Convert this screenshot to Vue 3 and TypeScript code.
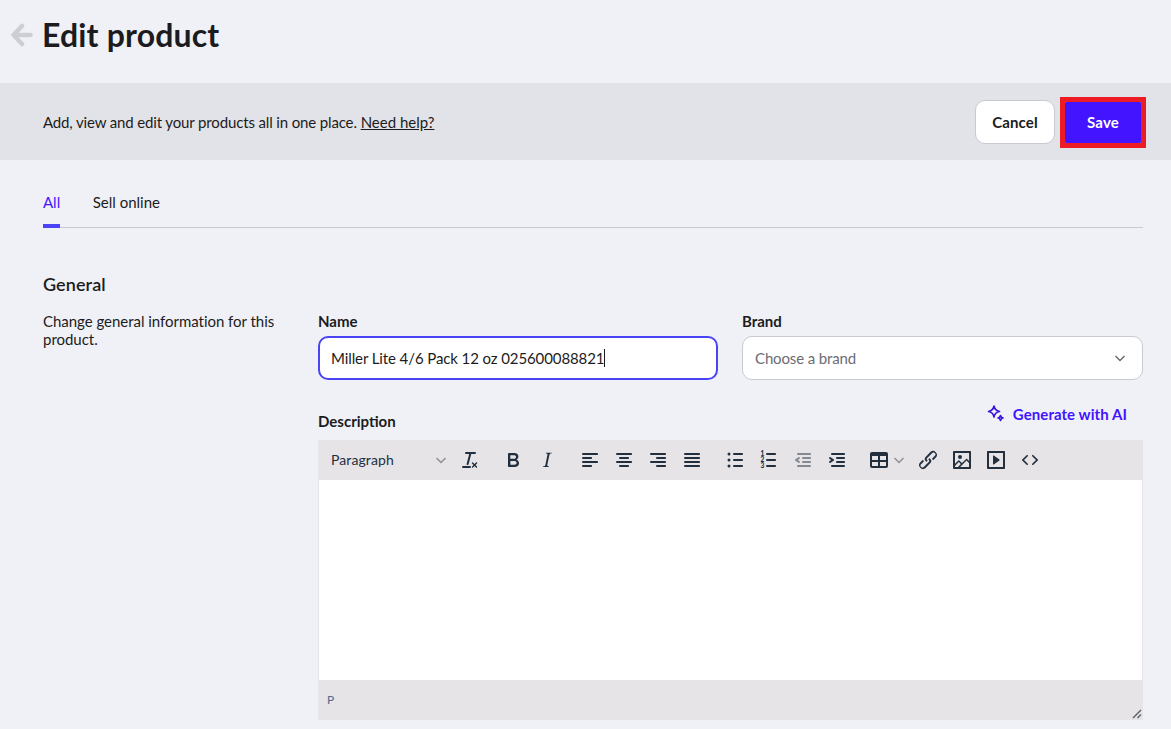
<script setup lang="ts">
const icons = {
  removeFormat: 'M13.2 6a1 1 0 0 1 0 .2l-2.6 10a1 1 0 0 1-1 .8h-.2a.8.8 0 0 1-.8-1l2.6-10H8a1 1 0 1 1 0-2h9a1 1 0 0 1 0 2h-3.8zM5 18h7a1 1 0 0 1 0 2H5a1 1 0 0 1 0-2zm13 1.5L16.5 18 15 19.5a.7.7 0 0 1-1-1l1.5-1.5-1.5-1.5a.7.7 0 0 1 1-1l1.5 1.5 1.5-1.5a.7.7 0 0 1 1 1L17.5 17l1.5 1.5a.7.7 0 0 1-1 1z',
  bold: 'M7.8 19c-.3 0-.5 0-.6-.2l-.2-.5V5.7c0-.2 0-.4.2-.5l.6-.2h5c1.5 0 2.7.3 3.5 1 .7.6 1.1 1.4 1.1 2.5a3 3 0 0 1-.6 1.9c-.4.6-1 1-1.6 1.2.4.1.9.3 1.3.6s.8.7 1 1.2c.4.4.5 1 .5 1.6 0 1.3-.4 2.3-1.3 3-.8.7-2.1 1-3.8 1H7.8zm5-8.3c.6 0 1.2-.1 1.6-.5.4-.3.6-.7.6-1.3 0-1.1-.8-1.7-2.3-1.7H9.3v3.5h3.4zm.5 6c.7 0 1.3-.1 1.7-.4.4-.4.6-.9.6-1.5s-.2-1-.7-1.4c-.4-.3-1-.4-2-.4H9.4v3.8h4z',
  italic: 'M16.7 4.7l-.1.9h-.3c-.6 0-1 0-1.4.3-.3.3-.4.6-.5 1.1l-2.1 9.8v.6c0 .5.4.8 1.4.8h.2l-.2.8H8l.2-.8h.2c1.1 0 1.8-.5 2-1.5l2-9.8.1-.5c0-.6-.4-.8-1.4-.8h-.3l.2-.9h5.8z',
  alignLeft: 'M5 5h14c.6 0 1 .4 1 1s-.4 1-1 1H5a1 1 0 1 1 0-2zm0 4h8c.6 0 1 .4 1 1s-.4 1-1 1H5a1 1 0 1 1 0-2zm0 8h8c.6 0 1 .4 1 1s-.4 1-1 1H5a1 1 0 0 1 0-2zm0-4h14c.6 0 1 .4 1 1s-.4 1-1 1H5a1 1 0 0 1 0-2z',
  alignCenter: 'M5 5h14c.6 0 1 .4 1 1s-.4 1-1 1H5a1 1 0 1 1 0-2zm3 4h8c.6 0 1 .4 1 1s-.4 1-1 1H8a1 1 0 1 1 0-2zm0 8h8c.6 0 1 .4 1 1s-.4 1-1 1H8a1 1 0 0 1 0-2zm-3-4h14c.6 0 1 .4 1 1s-.4 1-1 1H5a1 1 0 0 1 0-2z',
  alignRight: 'M5 5h14c.6 0 1 .4 1 1s-.4 1-1 1H5a1 1 0 1 1 0-2zm6 4h8c.6 0 1 .4 1 1s-.4 1-1 1h-8a1 1 0 0 1 0-2zm0 8h8c.6 0 1 .4 1 1s-.4 1-1 1h-8a1 1 0 0 1 0-2zm-6-4h14c.6 0 1 .4 1 1s-.4 1-1 1H5a1 1 0 0 1 0-2z',
  justify: 'M5 5h14c.6 0 1 .4 1 1s-.4 1-1 1H5a1 1 0 1 1 0-2zm0 4h14c.6 0 1 .4 1 1s-.4 1-1 1H5a1 1 0 1 1 0-2zm0 4h14c.6 0 1 .4 1 1s-.4 1-1 1H5a1 1 0 0 1 0-2zm0 4h14c.6 0 1 .4 1 1s-.4 1-1 1H5a1 1 0 0 1 0-2z',
  bullist: 'M11 5h8c.6 0 1 .4 1 1s-.4 1-1 1h-8a1 1 0 0 1 0-2zm0 6h8c.6 0 1 .4 1 1s-.4 1-1 1h-8a1 1 0 0 1 0-2zm0 6h8c.6 0 1 .4 1 1s-.4 1-1 1h-8a1 1 0 0 1 0-2zM4.500 6a1.500 1.500 0 1 0 3 0 1.500 1.500 0 1 0-3 0zm0 6a1.500 1.500 0 1 0 3 0 1.500 1.500 0 1 0-3 0zm0 6a1.500 1.500 0 1 0 3 0 1.500 1.500 0 1 0-3 0z',
  numlistLines: 'M10 17h8c.6 0 1 .4 1 1s-.4 1-1 1h-8a1 1 0 0 1 0-2zm0-6h8c.6 0 1 .4 1 1s-.4 1-1 1h-8a1 1 0 0 1 0-2zm0-6h8c.6 0 1 .4 1 1s-.4 1-1 1h-8a1 1 0 1 1 0-2z',
  outdent: 'M7 5h12c.6 0 1 .4 1 1s-.4 1-1 1H7a1 1 0 1 1 0-2zm5 4h7c.6 0 1 .4 1 1s-.4 1-1 1h-7a1 1 0 0 1 0-2zm0 4h7c.6 0 1 .4 1 1s-.4 1-1 1h-7a1 1 0 0 1 0-2zm-5 4h12a1 1 0 0 1 0 2H7a1 1 0 0 1 0-2zm1.600-3.800a1 1 0 0 1-1.200 1.600l-3-2a1 1 0 0 1 0-1.600l3-2a1 1 0 0 1 1.200 1.600L6.800 12l1.800 1.200z',
  indent: 'M7 5h12c.6 0 1 .4 1 1s-.4 1-1 1H7a1 1 0 1 1 0-2zm5 4h7c.6 0 1 .4 1 1s-.4 1-1 1h-7a1 1 0 0 1 0-2zm0 4h7c.6 0 1 .4 1 1s-.4 1-1 1h-7a1 1 0 0 1 0-2zm-5 4h12a1 1 0 0 1 0 2H7a1 1 0 0 1 0-2zm-2.600-3.800L6.200 12l-1.800-1.200a1 1 0 0 1 1.200-1.600l3 2a1 1 0 0 1 0 1.600l-3 2a1 1 0 1 1-1.200-1.600z',
  table: 'M19 4a2 2 0 0 1 2 2v12a2 2 0 0 1-2 2H5a2 2 0 0 1-2-2V6c0-1.100.9-2 2-2h14zm0 10h-6v4h6v-4zm-8 0H5v4h6v-4zm8-6h-6v4h6V8zm-8 0H5v4h6V8z',
  link: 'M6.200 12.300a1 1 0 0 1 1.400 1.400l-2 2a2 2 0 1 0 2.600 2.800l4.800-4.800a1 1 0 0 0 0-1.400 1 1 0 1 1 1.400-1.300 2.900 2.900 0 0 1 0 4L9.600 20a3.900 3.900 0 0 1-5.500-5.500l2-2zm11.600-.6a1 1 0 0 1-1.400-1.400l2-2a2 2 0 1 0-2.600-2.800L11 10.300a1 1 0 0 0 0 1.400A1 1 0 1 1 9.600 13a2.900 2.900 0 0 1 0-4L14.400 4a3.900 3.900 0 0 1 5.500 5.500l-2 2z',
  image: 'M5 15.700l3.300-3.200c.3-.3.7-.3 1 0L12 15l4.100-4c.3-.4.8-.4 1 0l2 1.900V5H5v10.700zM5 18V19h3l2.800-2.900-2-2L5 17.900zm14-3l-2.500-2.400-6.400 6.500H19v-4zM4 3h16c.6 0 1 .4 1 1v16c0 .6-.4 1-1 1H4a1 1 0 0 1-1-1V4c0-.6.4-1 1-1zm6 8a2 2 0 1 1 0-4 2 2 0 0 1 0 4z',
  media: 'M4 3h16c.6 0 1 .4 1 1v16c0 .6-.4 1-1 1H4a1 1 0 0 1-1-1V4c0-.6.4-1 1-1zm1 2v14h14V5H5zm4.800 2.600l5.600 4a.5.5 0 0 1 0 .8l-5.600 4A.5.5 0 0 1 9 16V8a.5.5 0 0 1 .8-.4z',
  code: 'M9.800 15.700c.3.3.3.8 0 1-.3.4-.9.4-1.200 0l-4.400-4.100a.8.8 0 0 1 0-1.200l4.400-4.200c.3-.3.9-.3 1.200 0 .3.3.3.8 0 1.100L6 12l3.800 3.700zm4.400 0c-.3.3-.3.8 0 1 .3.4.9.4 1.200 0l4.400-4.100a.8.8 0 0 0 0-1.200l-4.400-4.200a.8.8 0 0 0-1.200 0c-.3.3-.3.8 0 1.100L18 12l-3.800 3.700z',
}
</script>

<template>
  <div class="page">
    <header class="title-row">
      <svg class="back" viewBox="0 0 22 24" width="22" height="24">
        <path d="M19.500 12H3.500M11 3L2.500 12l8.500 9" />
      </svg>
      <h1>Edit product</h1>
    </header>

    <div class="action-bar">
      <p><span class="intro">Add, view and edit your products all in one place.</span> <a href="#">Need help?</a></p>
      <div class="actions">
        <button class="btn-cancel">Cancel</button>
        <span class="save-mark"><button class="btn-save">Save</button></span>
      </div>
    </div>

    <main class="content">
      <nav class="tabs">
        <a class="tab active">All</a>
        <a class="tab">Sell online</a>
      </nav>

      <h2>General</h2>
      <section class="general">
        <p class="hint">Change general information for this product.</p>
        <div class="fields">
          <div class="field-row">
            <div class="field">
              <label>Name</label>
              <div class="input focused">Miller Lite 4/6 Pack 12 oz 025600088821<span class="caret"></span></div>
            </div>
            <div class="field">
              <label>Brand</label>
              <div class="input select">
                <span>Choose a brand</span>
                <svg viewBox="0 0 12 12" width="12" height="12"><path d="M1.500 4l4.500 4.500L10.500 4" /></svg>
              </div>
            </div>
          </div>

          <div class="desc-head">
            <label>Description</label>
            <a class="ai-link">
              <svg viewBox="0 0 18 18" width="18" height="18">
                <path d="M7 1c.7 3.600 1.900 4.800 5.500 5.500-3.600.7-4.800 1.900-5.500 5.500-.7-3.600-1.900-4.800-5.500-5.500C5.100 5.800 6.300 4.600 7 1z" />
                <path d="M13.500 10.500c.3 1.600.9 2.200 2.500 2.500-1.600.3-2.200.9-2.500 2.500-.3-1.600-.9-2.200-2.500-2.500 1.600-.3 2.200-.9 2.500-2.500z" />
              </svg>
              Generate with AI
            </a>
          </div>

          <div class="editor">
            <div class="toolbar">
              <div class="group">
                <div class="format-select">
                  <span>Paragraph</span>
                  <svg class="chev" viewBox="0 0 12 12" width="12" height="12"><path d="M1.500 4l4.500 4.500L10.500 4" /></svg>
                </div>
                <span class="tbtn"><svg viewBox="0 0 24 24"><path :d="icons.removeFormat" /></svg></span>
              </div>
              <div class="group">
                <span class="tbtn"><svg viewBox="0 0 24 24"><path :d="icons.bold" /></svg></span>
                <span class="tbtn"><svg viewBox="0 0 24 24"><path :d="icons.italic" /></svg></span>
              </div>
              <div class="group">
                <span class="tbtn"><svg viewBox="0 0 24 24"><path :d="icons.alignLeft" /></svg></span>
                <span class="tbtn"><svg viewBox="0 0 24 24"><path :d="icons.alignCenter" /></svg></span>
                <span class="tbtn"><svg viewBox="0 0 24 24"><path :d="icons.alignRight" /></svg></span>
                <span class="tbtn"><svg viewBox="0 0 24 24"><path :d="icons.justify" /></svg></span>
              </div>
              <div class="group">
                <span class="tbtn"><svg viewBox="0 0 24 24"><path :d="icons.bullist" /></svg></span>
                <span class="tbtn">
                  <svg viewBox="0 0 24 24">
                    <path :d="icons.numlistLines" />
                    <text x="3.500" y="8" class="num">1</text>
                    <text x="3.500" y="14" class="num">2</text>
                    <text x="3.500" y="20" class="num">3</text>
                  </svg>
                </span>
                <span class="tbtn dim"><svg viewBox="0 0 24 24"><path :d="icons.outdent" /></svg></span>
                <span class="tbtn"><svg viewBox="0 0 24 24"><path :d="icons.indent" /></svg></span>
              </div>
              <div class="group last">
                <span class="tbtn split">
                  <svg viewBox="0 0 24 24"><path fill-rule="evenodd" :d="icons.table" /></svg>
                  <svg class="chev" viewBox="0 0 12 12" width="12" height="12"><path d="M1.500 4l4.500 4.500L10.500 4" /></svg>
                </span>
                <span class="tbtn"><svg viewBox="0 0 24 24"><path :d="icons.link" /></svg></span>
                <span class="tbtn"><svg viewBox="0 0 24 24"><path fill-rule="evenodd" :d="icons.image" /></svg></span>
                <span class="tbtn"><svg viewBox="0 0 24 24"><path fill-rule="evenodd" :d="icons.media" /></svg></span>
                <span class="tbtn"><svg viewBox="0 0 24 24"><path :d="icons.code" /></svg></span>
              </div>
            </div>
            <div class="editor-body"></div>
            <div class="statusbar">
              <span>P</span>
              <svg viewBox="0 0 10 10" width="10" height="10"><path d="M9 1L1 9M9 5.500L5.500 9" /></svg>
            </div>
          </div>
        </div>
      </section>
    </main>
  </div>
</template>

<style>
body {
  background: #f0f1f7;
}
</style>

<style scoped>
.page {
  font-family: Lato, "Liberation Sans", sans-serif;
  font-size: 15px;
  color: #1c1c20;
  background: #f0f1f7;
  min-height: 729px;
}

.title-row {
  display: flex;
  align-items: center;
  gap: 9px;
  height: 83px;
  padding: 0 0 13px 11px;
  box-sizing: border-box;
}

.back {
  fill: none;
  stroke: #cdced4;
  stroke-width: 4.500;
  stroke-linejoin: round;
  stroke-linecap: round;
}

h1 {
  margin: 0;
  font-size: 32px;
  font-weight: 700;
  line-height: 40px;
  letter-spacing: 0.17px;
}

.action-bar {
  display: flex;
  align-items: center;
  justify-content: space-between;
  height: 77px;
  padding: 0 25px 0 43px;
  background: #e2e3e8;
}

.action-bar p {
  margin: 0;
}

.intro {
  letter-spacing: -0.14px;
}

.action-bar a {
  color: inherit;
}

.actions {
  display: flex;
  align-items: center;
  gap: 5px;
}

button {
  font: inherit;
  font-weight: 700;
  letter-spacing: 0.15px;
  cursor: pointer;
}

.btn-cancel {
  width: 80px;
  height: 44px;
  background: #fff;
  border: 1px solid #c9cad1;
  border-radius: 10px;
  color: #1c1c20;
}

.save-mark {
  display: block;
  margin-top: 2px;
  border: 5px solid #ed1c24;
  background: #fff;
}

.btn-save {
  display: block;
  width: 76px;
  height: 41px;
  padding: 0 0 2px;
  background: #4214ff;
  border: none;
  border-radius: 1px;
  color: #fff;
}

.content {
  padding: 0 28px 0 43px;
}

.tabs {
  display: flex;
  gap: 32.500px;
  height: 68px;
  border-bottom: 1px solid #c9cad1;
  box-sizing: border-box;
}

.tab {
  display: block;
  height: 68px;
  padding-top: 32px;
  box-sizing: border-box;
  line-height: 20px;
}

.tab.active {
  color: #4214ff;
  border-bottom: 4px solid #4a44f5;
}

h2 {
  margin: 45px 0 0;
  font-size: 18px;
  font-weight: 600;
  line-height: 22px;
  letter-spacing: 0.1px;
}

.general {
  display: grid;
  grid-template-columns: 275px 1fr;
  margin-top: 17px;
}

.hint {
  margin: 0;
  width: 240px;
  line-height: 18px;
  letter-spacing: -0.03px;
}

.fields {
  min-width: 0;
}

.field-row {
  display: grid;
  grid-template-columns: 400px 1fr;
  gap: 24px;
}

label {
  display: block;
  font-weight: 700;
  line-height: 18px;
}

.input {
  display: flex;
  align-items: center;
  height: 44px;
  margin-top: 6px;
  padding: 0 12px;
  box-sizing: border-box;
  background: #fff;
  border: 1px solid #c9cad1;
  border-radius: 10px;
}

.input.focused {
  border: 2px solid #4a44f5;
  padding: 0 11px;
  letter-spacing: -0.1px;
}

.caret {
  display: inline-block;
  width: 1px;
  height: 18px;
  background: #1c1c20;
}

.select {
  justify-content: space-between;
  color: #6b6c72;
  letter-spacing: -0.14px;
}

.select svg {
  fill: none;
  stroke: #6b6c72;
  stroke-width: 1.500;
  margin-right: 4px;
}

.desc-head {
  display: flex;
  justify-content: space-between;
  align-items: flex-end;
  height: 60px;
  padding: 0 16px 9px 0;
  box-sizing: border-box;
}

.desc-head label {
  margin: 0 0 1px;
}

.ai-link {
  display: flex;
  align-items: center;
  gap: 8px;
  margin-bottom: 8px;
  color: #4214ff;
  font-weight: 700;
  letter-spacing: 0.07px;
}

.ai-link svg {
  fill: none;
  stroke: #3a12e0;
  stroke-width: 1.600;
  stroke-linejoin: round;
}

.editor {
  display: flex;
  flex-direction: column;
  height: 280px;
  border: 1px solid #e6e4e7;
  border-width: 0 1px;
  box-sizing: border-box;
}

.toolbar {
  display: flex;
  align-items: center;
  gap: 9px;
  height: 40px;
  background: #e6e4e7;
  margin: 0 -1px;
  padding-left: 4px;
}

.group {
  display: flex;
  align-items: center;
}

.group.last {
  margin-left: -1px;
}

.format-select {
  display: flex;
  align-items: center;
  justify-content: space-between;
  width: 131px;
  padding: 0 6px 0 9px;
  box-sizing: border-box;
  font-size: 14px;
  letter-spacing: 0.1px;
  color: #222f3e;
}

.format-select span {
  margin-top: -2px;
}

.chev {
  fill: none;
  stroke: #8f8f96;
  stroke-width: 1.500;
}

.tbtn {
  display: flex;
  align-items: center;
  justify-content: center;
  width: 34px;
  height: 34px;
  fill: #222f3e;
}

.tbtn > svg:first-child {
  width: 24px;
  height: 24px;
}

.tbtn.dim {
  fill: rgba(34, 47, 62, 0.5);
}

.tbtn.split {
  width: 49px;
  justify-content: flex-start;
  gap: 2px;
  padding-left: 5px;
  box-sizing: border-box;
}

.num {
  font-size: 6.500px;
  font-weight: 900;
  fill: #222f3e;
}

.editor-body {
  flex: 1;
  background: #fff;
}

.statusbar {
  display: flex;
  align-items: center;
  justify-content: space-between;
  height: 40px;
  margin: 0 -1px;
  padding: 0 0 2px 9px;
  box-sizing: border-box;
  background: #e6e4e7;
  font-size: 12px;
  color: #4f6b8f;
  position: relative;
}

.statusbar svg {
  position: absolute;
  right: 1px;
  bottom: 1px;
  fill: none;
  stroke: #5f656c;
  stroke-width: 1.500;
}
</style>
